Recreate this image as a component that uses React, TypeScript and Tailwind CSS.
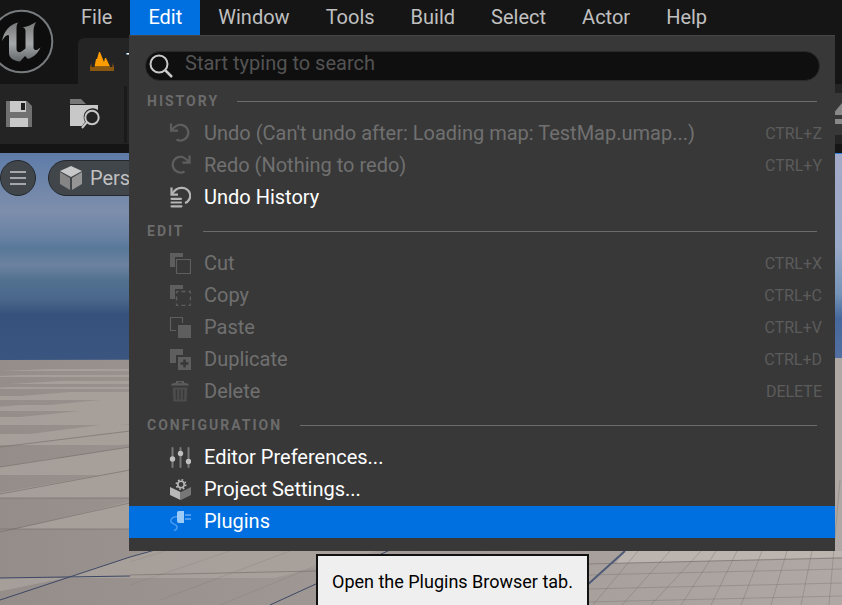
import React from "react";

type Item = { label: string; icon: React.ReactNode; keys?: string; disabled?: boolean; active?: boolean };

const Icon = ({ children }: { children: React.ReactNode }) => (
  <svg viewBox="0 0 22 22" className="h-[22px] w-[22px] shrink-0" aria-hidden="true">
    {children}
  </svg>
);

const UndoIcon = () => (
  <Icon>
    <g fill="none" stroke="#5e5e5e" strokeWidth="2.200">
      <path d="M2 1.500v7.200h7" />
      <path d="M2.500 8.200C6 3.800 9 2.500 12.500 2.800A7.900 7.900 0 1 1 7.500 17.500" />
    </g>
  </Icon>
);

const RedoIcon = () => (
  <Icon>
    <g fill="none" stroke="#5e5e5e" strokeWidth="2.200">
      <path d="M20.500 1.500v7.200h-7" />
      <path d="M20 8.200C16.500 3.800 13.500 2.500 10.500 2.800A7.900 7.900 0 1 0 15.500 17.500" />
    </g>
  </Icon>
);

const HistoryIcon = () => (
  <Icon>
    <g fill="none" stroke="#b4b4b4" strokeWidth="2.200">
      <path d="M2.500 1.500v7.200h6.500" />
      <path d="M3 8C6 3 9 1.800 12.500 1.900A7.800 7.800 0 0 1 16 17" />
      <path d="M2.500 12.800h9.500M2.500 16.500h9.500M2.500 20.300h10" strokeLinecap="round" />
    </g>
  </Icon>
);

const CutIcon = () => (
  <Icon>
    <path d="M1 1h13v4H6v10H1z" fill="#5e5e5e" />
    <path d="M7.500 7.500h14v14h-14z" fill="none" stroke="#5e5e5e" strokeWidth="1.200" />
  </Icon>
);

const CopyIcon = () => (
  <Icon>
    <path d="M1 1h13v4H6v10H1z" fill="#5e5e5e" />
    <path d="M7.500 7.500h14v14h-14z" fill="none" stroke="#5e5e5e" strokeWidth="1.400" strokeDasharray="2 3 4 3 2 0" />
  </Icon>
);

const PasteIcon = () => (
  <Icon>
    <path d="M7 14.500H1.500v-13h12V7" fill="none" stroke="#5e5e5e" strokeWidth="1.200" />
    <path d="M9 9h13v13H9z" fill="#5e5e5e" />
  </Icon>
);

const DuplicateIcon = () => (
  <Icon>
    <path d="M1 1h13v6H7v8H1z" fill="#5e5e5e" />
    <path d="M9 9h13v13H9z" fill="#5e5e5e" />
    <path d="M15.500 11.500v8M11.500 15.500h8" stroke="#383838" strokeWidth="2.500" />
  </Icon>
);

const DeleteIcon = () => (
  <Icon>
    <path d="M2 5.500c0-2 3-2.500 5-2.500V1h8v2c2 0 5 .5 5 2.500zM9 2.200v1h4v-1z" fill="#5c5c5c" fillRule="evenodd" />
    <path d="M3.500 7.500h15l-1 14h-13z" fill="#4c4c4c" />
    <path d="M7.500 9.500v10M11 9.500v10M14.500 9.500v10" stroke="#393939" strokeWidth="1.300" />
  </Icon>
);

const SlidersIcon = () => (
  <Icon>
    <path d="M3.500 2v19M11.500 2v19M19.500 2v19" stroke="#777" strokeWidth="2" strokeLinecap="round" />
    <g fill="#c0c0c0">
      <circle cx="3.500" cy="13" r="2.700" />
      <circle cx="11.500" cy="7.500" r="2.700" />
      <circle cx="19.500" cy="15.500" r="2.700" />
    </g>
  </Icon>
);

const ProjectIcon = () => (
  <Icon>
    <path d="M1 9l10.500 5v8L1 17z" fill="#b8b8b8" />
    <path d="M22 9l-10 5v8l10-5z" fill="#777" />
    <circle cx="12" cy="6.500" r="5.200" fill="#383838" />
    <circle cx="12" cy="6.500" r="3.200" fill="none" stroke="#b8b8b8" strokeWidth="1.600" />
    <circle cx="12" cy="6.500" r="4.700" fill="none" stroke="#b8b8b8" strokeWidth="1.600" strokeDasharray="1.700 1.990" />
  </Icon>
);

const PlugIcon = () => (
  <Icon>
    <path d="M10 1h5v12h-5c-2 0-2-1.500-2-3V4c0-2 0-3 2-3z" fill="#9ccbf8" />
    <path d="M16 5h6M16 9h6" stroke="#4a9df0" strokeWidth="2" />
    <path d="M8 6.500C3 7 1 9.500 2 12s6 2 6 5-2 3.200-3 3.500" fill="none" stroke="#4a9df0" strokeWidth="1.500" />
  </Icon>
);

const sections: { title: string; items: Item[] }[] = [
  {
    title: "HISTORY",
    items: [
      { label: "Undo (Can't undo after: Loading map: TestMap.umap...)", icon: <UndoIcon />, keys: "CTRL+Z", disabled: true },
      { label: "Redo (Nothing to redo)", icon: <RedoIcon />, keys: "CTRL+Y", disabled: true },
      { label: "Undo History", icon: <HistoryIcon /> },
    ],
  },
  {
    title: "EDIT",
    items: [
      { label: "Cut", icon: <CutIcon />, keys: "CTRL+X", disabled: true },
      { label: "Copy", icon: <CopyIcon />, keys: "CTRL+C", disabled: true },
      { label: "Paste", icon: <PasteIcon />, keys: "CTRL+V", disabled: true },
      { label: "Duplicate", icon: <DuplicateIcon />, keys: "CTRL+D", disabled: true },
      { label: "Delete", icon: <DeleteIcon />, keys: "DELETE", disabled: true },
    ],
  },
  {
    title: "CONFIGURATION",
    items: [
      { label: "Editor Preferences...", icon: <SlidersIcon /> },
      { label: "Project Settings...", icon: <ProjectIcon /> },
      { label: "Plugins", icon: <PlugIcon />, active: true },
    ],
  },
];

const menus = ["File", "Edit", "Window", "Tools", "Build", "Select", "Actor", "Help"];

function Logo() {
  return (
    <svg viewBox="0 0 54 76" className="absolute left-0 top-0 h-[76px] w-[54px]" role="img" aria-label="Unreal Engine">
      <defs>
        <linearGradient id="metal" x1="0" y1="0" x2="0" y2="1">
          <stop offset="0" stopColor="#777" />
          <stop offset=".55" stopColor="#a5a8aa" />
          <stop offset="1" stopColor="#62676a" />
        </linearGradient>
      </defs>
      <circle cx="21.500" cy="41.500" r="30.800" fill="#0d0d0d" stroke="#777b7d" strokeWidth="2" />
      <path
        d="M2 41C4 31 9 25 18 22.500c-1.500 2.500-1.500 4.500-1.500 7V49c0 3 2.500 4 5 2.500l4-3V31c0-3-2-3.500-3.500-3.500 5-.5 9-2.500 14-5.500-2 4-2.500 6-2.500 9v16c0 4 3 4 7 .5-3 6.500-7 9.500-12.500 11.500L25 56l-5 5.500c-7-.5-11-4-11-8.500V36.500c0-3-4-1.500-7 4.500z"
        fill="url(#metal)"
      />
    </svg>
  );
}

const tileRows = [
  { top: 578, bottom: 650, from: -180, to: -500 },
  { top: 529, bottom: 578, from: 215, to: 65 },
  { top: 498, bottom: 529, from: 145, to: 15 },
  { top: 475, bottom: 498, from: 100, to: -30 },
  { top: 458, bottom: 475, from: 55, to: -50 },
  { top: 445, bottom: 458, from: 140, to: 60 },
  { top: 434, bottom: 445, from: -10, to: -90 },
  { top: 425, bottom: 434, from: 100, to: 30 },
  { top: 417, bottom: 425, from: -10, to: -90 },
  { top: 411, bottom: 417, from: 80, to: 20 },
  { top: 405, bottom: 411, from: 20, to: -50 },
  { top: 400, bottom: 405, from: 100, to: 50 },
  { top: 396, bottom: 400, from: 0, to: -60 },
  { top: 392, bottom: 396, from: 70, to: 20 },
  { top: 387, bottom: 389, from: 10, to: -30 },
  { top: 381, bottom: 384, from: 60, to: 10 },
  { top: 375, bottom: 377, from: 20, to: -20 },
  { top: 369, bottom: 371, from: 50, to: 0 },
];

function Scene() {
  return (
    <svg viewBox="0 153 842 452" preserveAspectRatio="none" className="absolute inset-0 h-full w-full" aria-hidden="true">
      <defs>
        <linearGradient id="sky" x1="0" y1="0" x2="0" y2="1">
          <stop offset="0" stopColor="#5e7ca8" />
          <stop offset=".28" stopColor="#7e8eac" />
          <stop offset=".4" stopColor="#6a82a4" />
          <stop offset=".46" stopColor="#587899" />
          <stop offset=".54" stopColor="#6c829f" />
          <stop offset=".62" stopColor="#50708f" />
          <stop offset=".7" stopColor="#4b688c" />
          <stop offset=".78" stopColor="#36527c" />
          <stop offset="1" stopColor="#3a5680" />
        </linearGradient>
        <linearGradient id="brightSky" x1="0" y1="0" x2="0" y2="1">
          <stop offset="0" stopColor="#a3aac8" />
          <stop offset=".45" stopColor="#9aaac8" />
          <stop offset=".68" stopColor="#7594b8" />
          <stop offset=".8" stopColor="#46689c" />
          <stop offset="1" stopColor="#5370a2" />
        </linearGradient>
        <linearGradient id="floor" x1="0" y1="0" x2="1" y2="0">
          <stop offset="0" stopColor="#958d89" />
          <stop offset="1" stopColor="#b0a8a4" />
        </linearGradient>
      </defs>
      <path d="M0 153h842v207H0z" fill="url(#sky)" />
      <path d="M600 153h242v207H600z" fill="url(#brightSky)" />
      <path d="M600 153h242v1H600z" fill="#2f7fdc" />
      <path d="M0 360L842 358V605H0z" fill="url(#floor)" />
      {tileRows.map((r) => (
        <path
          key={r.top}
          d={`M${r.to} ${r.bottom}L${r.from} ${r.top}H${r.from + 245}L${r.to + 210} ${r.bottom}z`}
          fill="#aaa29d"
          opacity=".8"
        />
      ))}
      <path d="M625 551H842V557L616 563z" fill="#bbb4af" />
      <g fill="none" stroke="#716c6b" strokeWidth="1">
        <path d="M0 447L130 431M0 467L130 447M0 494L130 470M0 532L130 503M0 498H130M0 529H130M130 575L316 571M587 564L842 558" opacity=".6" />
        <path d="M0 578L130 576M0 600L130 557L155 550M270 605L390 550" stroke="#3c4765" />
        <path d="M585 587L625 551" stroke="#4f5a77" strokeWidth="2" />
        <path d="M593 605L638 551M622 605L670 551M651 605L701 551M681 605L716 551M711 605L737 551M741 605L762 551M771 605L787 551M801 605L812 551M829 605L840 480M587 575L842 569M587 589L842 583M587 602L842 596" opacity=".35" />
        <path d="M130 585L230 551M160 600L290 551M220 605L330 560M130 562L165 551" opacity=".2" />
      </g>
    </svg>
  );
}

function MenuRow({ item }: { item: Item }) {
  return (
    <button
      type="button"
      role="menuitem"
      disabled={item.disabled}
      className={`flex h-8 w-full items-center pb-0.5 pl-10 pr-[13px] text-left text-xl ${item.active ? "bg-[#0070e0]" : ""} ${item.disabled ? "text-[#707070]" : "text-white"}`}
    >
      {item.icon}
      <span className="ml-[13px] flex-1 whitespace-nowrap">{item.label}</span>
      {item.keys && <kbd className="pt-0.5 font-[Roboto,sans-serif] text-base text-[#5c5c5c]">{item.keys}</kbd>}
    </button>
  );
}

function EditMenu() {
  return (
    <div role="menu" aria-label="Edit" className="absolute left-[129px] top-[35px] z-20 w-[706px] border-t border-[#464646] bg-[#383838] pb-[13px] pt-[15px]">
      <label className="mb-[3px] ml-4 mr-[15px] flex h-[30px] items-center rounded-full border border-[#2a2a2a] bg-[#0f0f0f] pl-[3px]">
        <svg viewBox="0 0 24 24" className="h-6 w-6 shrink-0" fill="none" stroke="#c8c8c8" strokeWidth="2" aria-hidden="true">
          <circle cx="10" cy="10" r="8.500" />
          <path d="M16 16l7 7" strokeWidth="2.500" />
        </svg>
        <input
          type="text"
          aria-label="Search menu"
          placeholder="Start typing to search"
          className="ml-3 h-full min-w-0 flex-1 bg-transparent pb-1.5 text-xl text-white outline-none placeholder:text-[#535353]"
        />
      </label>
      {sections.map((section) => (
        <section key={section.title}>
          <div className="flex h-[34px] items-center gap-[18px] px-[18px]">
            <h2 className="text-sm font-bold tracking-[2px] text-[#6b6b6b]">{section.title}</h2>
            <div className="h-px flex-1 bg-[#6b6b6b]" />
          </div>
          {section.items.map((item) => (
            <MenuRow key={item.label} item={item} />
          ))}
        </section>
      ))}
    </div>
  );
}

export default function App() {
  return (
    <div className="relative flex h-screen flex-col overflow-hidden bg-[#151515] font-[Roboto,sans-serif] text-[#c0c0c0]">
      <header className="h-[84px] shrink-0">
        <nav className="flex h-[35px] pl-[63px] text-xl" aria-label="Main menu">
          {menus.map((name) => (
            <button key={name} type="button" className={`px-[18px] pb-0.5 ${name === "Edit" ? "bg-[#0070e0] text-white" : ""}`}>
              {name}
            </button>
          ))}
        </nav>
        <div className="flex pl-[78px] pt-[3px]">
          <div className="flex h-[46px] w-60 items-center gap-3 rounded-t-md bg-[#242424] pl-3">
            <svg viewBox="0 0 24 20" className="h-5 w-6" aria-hidden="true">
              <path d="M1.500 12L0 15.500V20h24v-4.500L22.500 12v4h-21z" fill="#8a5710" />
              <path d="M4.500 15.500L6 8h1l2-7h1l4 10 1-4h1l4 8.500z" fill="#ff9c00" />
            </svg>
            <span className="text-xl text-white">TestMap</span>
          </div>
        </div>
        <Logo />
      </header>
      <div className="flex h-[60px] shrink-0 items-center bg-[#242424] pl-[5px]">
        <button type="button" aria-label="Save">
          <svg viewBox="0 0 28 28" className="h-7 w-7" aria-hidden="true">
            <path d="M1 1h21l5 5v21H1z" fill="#707070" />
            <path d="M5 1h16v11H5zM5 18h18v9H5z" fill="#c8c8c8" />
            <path d="M16 3h4v7h-4z" fill="#202020" />
          </svg>
        </button>
        <button type="button" aria-label="Browse content" className="ml-9">
          <svg viewBox="0 0 32 32" className="h-8 w-8" aria-hidden="true">
            <path d="M1 1h11l5 5H1z" fill="#777" />
            <path d="M1 7h28v5a9 9 0 0 0-13 12l-3 4H1z" fill="#c8c8c8" />
            <g fill="none" stroke="#c8c8c8" strokeWidth="2">
              <circle cx="23" cy="19.500" r="6.700" />
              <path d="M18 24l-5 6" />
            </g>
          </svg>
        </button>
        <div className="ml-[23px] h-[57px] w-[3px] bg-[#1a1a1a]" />
        <div className="ml-auto h-[42px] w-5 bg-[#383838] pt-2">
          <svg viewBox="0 0 20 24" className="h-6 w-5" aria-hidden="true">
            <path d="M10 14L20 2v12zM8 18h12v5H8z" fill="#888" />
          </svg>
        </div>
      </div>
      <main className="relative mt-[9px] flex-1">
        <Scene />
        <div className="relative flex gap-3 pt-[7px]">
          <button type="button" aria-label="Viewport options" className="flex h-9 w-9 items-center justify-center rounded-full border border-[#24282c] bg-[#41464b]">
            <svg viewBox="0 0 18 16" className="h-4 w-[18px]" stroke="#c8c8c8" strokeWidth="1.300" aria-hidden="true">
              <path d="M1 2h16M1 8h16M1 14h16" />
            </svg>
          </button>
          <button type="button" className="flex h-9 items-center gap-[7px] rounded-full border border-[#24282c] bg-[#41464b] pl-[10px] pr-4 text-xl">
            <svg viewBox="0 0 24 24" className="h-6 w-6" aria-hidden="true">
              <path d="M12 0l11 5-11 6L1 5z" fill="#c8c8c8" />
              <path d="M1 6l10 6v12L1 18z" fill="#858585" />
              <path d="M23 6l-10 6v12l10-6z" fill="#959595" />
            </svg>
            Perspective
          </button>
        </div>
      </main>
      <EditMenu />
      <div role="tooltip" className="absolute left-[316px] top-[554px] z-30 h-16 border-2 border-[#111] bg-[#efefef] px-[14px] pt-3 text-lg text-black">
        Open the Plugins Browser tab.
      </div>
    </div>
  );
}
